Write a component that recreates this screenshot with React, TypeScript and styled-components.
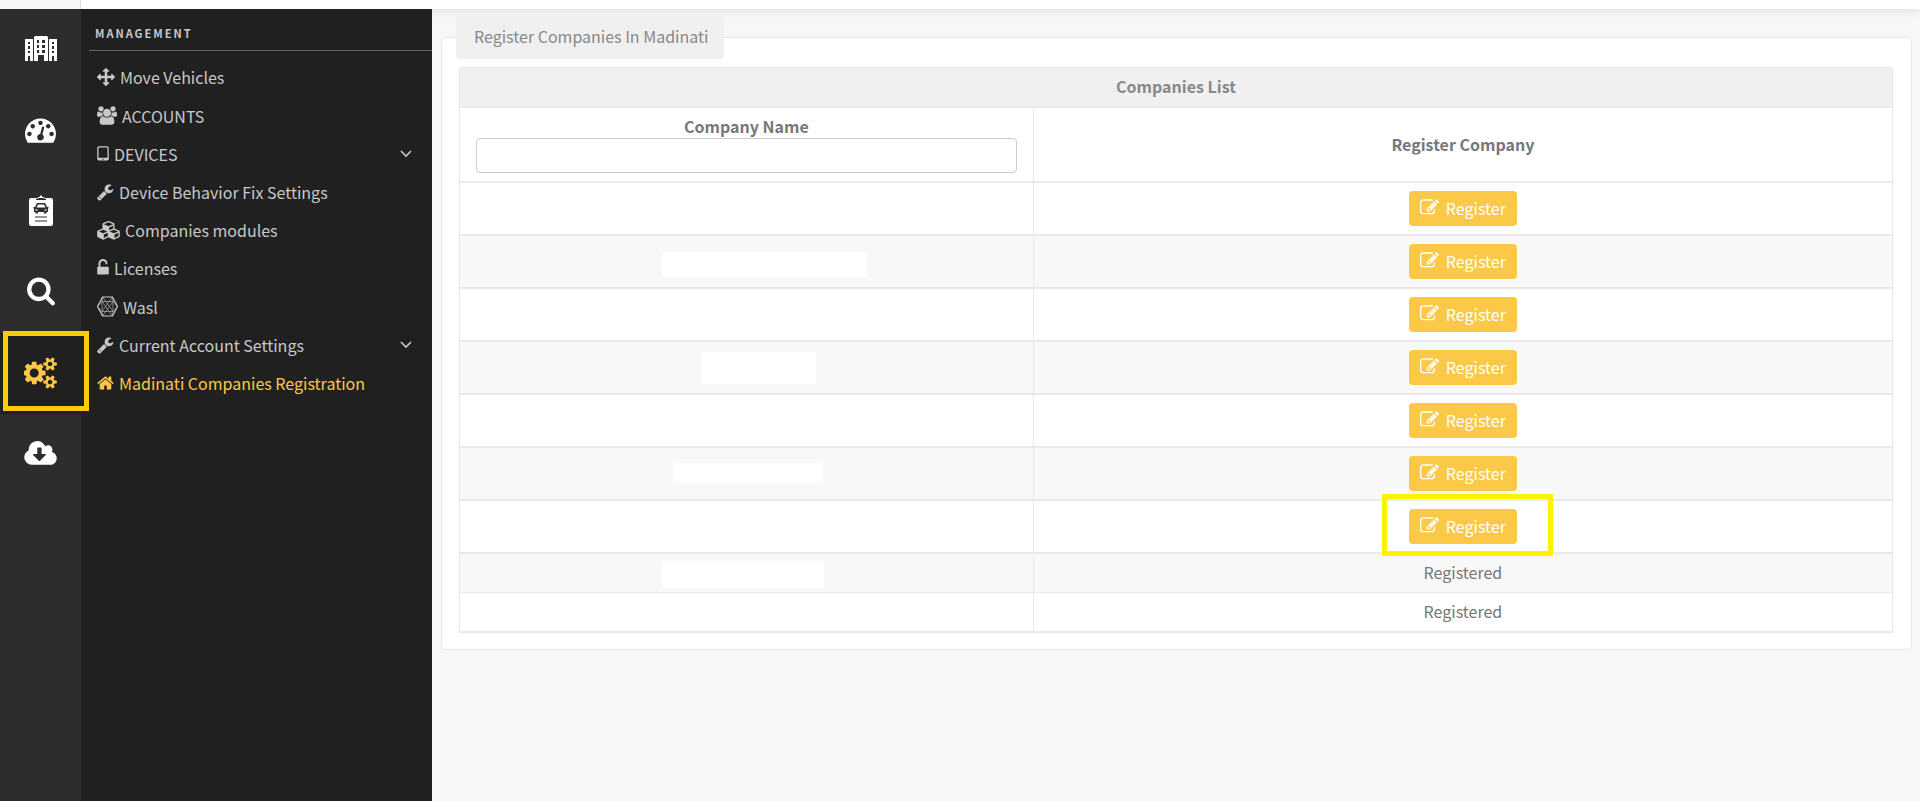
import React from "react";
import styled, { createGlobalStyle } from "styled-components";

const GlobalStyle = createGlobalStyle`
  *, *::before, *::after { box-sizing: border-box; }
  body {
    margin: 0;
    background: #f7f7f7;
    color: #777;
    font-family: "Noto Sans CJK SC", "Noto Sans", sans-serif;
    font-size: 16px;
    line-height: 22px;
  }
`;

const Page = styled.div`
  display: flex;
  flex-direction: column;
  min-height: 100vh;
`;

const TopBar = styled.header`
  display: flex;
  height: 9px;
  background: #fff;
  box-shadow: 0 2px 10px rgba(0, 0, 0, 0.1);
`;

const TopBarCorner = styled.div`
  width: 81px;
  background: #f5f5f5;
  border-right: 1px solid #ddd;
`;

const Body = styled.div`
  display: flex;
  flex: 1;
`;

const Rail = styled.nav`
  position: relative;
  z-index: 1;
  width: 81px;
  flex: none;
  background: #2d2d2d;
`;

const RailLink = styled.a<{ $active?: boolean }>`
  position: relative;
  display: flex;
  align-items: center;
  justify-content: center;
  height: 81px;
  padding-bottom: 2px;
  color: ${(p) => (p.$active ? "#fbc947" : "#fff")};
  background: ${(p) => (p.$active ? "#202020" : "transparent")};
`;

const RailMarker = styled.span`
  position: absolute;
  top: -2px;
  left: 3px;
  width: 86px;
  height: 80px;
  border: 5px solid #ffc90e;
`;

const Sidebar = styled.aside`
  position: relative;
  width: 351px;
  flex: none;
  padding-left: 8px;
  background: #202020;
`;

const SidebarTitle = styled.h2`
  margin: 0 0 8px;
  padding: 14px 6px 6px;
  border-bottom: 1px solid #666;
  color: #c8c8c8;
  font-size: 11px;
  line-height: 21px;
  font-weight: 700;
  letter-spacing: 2px;
`;

const MenuLink = styled.a<{ $active?: boolean }>`
  display: flex;
  align-items: center;
  gap: 5px;
  padding: 7px 20px 9px 8px;
  color: ${(p) => (p.$active ? "#fbc947" : "#c8c8c8")};
  text-decoration: none;
  svg { flex: none; }
`;

const MenuText = styled.span`
  flex: 1;
`;

const Main = styled.main`
  flex: 1;
  min-width: 0;
  padding: 7px 8px 24px 9px;
`;

const Panel = styled.fieldset`
  min-width: 0;
  margin: 0;
  padding: 8px 14px 16px;
  border: 1px solid #e9e9e9;
  border-radius: 4px;
  background: #fff;
`;

const PanelTitle = styled.legend`
  padding: 9px 16px 12px 18px;
  border-radius: 4px;
  background: #f0f0f0;
  color: #888;
`;

const TableFrame = styled.div`
  padding: 0 4px 0 3px;
`;

const Table = styled.table`
  width: 100%;
  table-layout: fixed;
  border-spacing: 0;
  border: 1px solid #e9e9e9;
  border-bottom: 0;
  border-radius: 4px 4px 0 0;
  text-align: center;
`;

const Column = styled.col<{ $width: string }>`
  width: ${(p) => p.$width};
`;

const TableTitle = styled.th`
  padding: 7px 16px 9px;
  border-bottom: 2px solid #e9e9e9;
  background: #f0f0f0;
  color: #888;
  font-weight: 700;
`;

const ColumnHead = styled.th`
  padding: 7px 16px 8px;
  border-bottom: 2px solid #e9e9e9;
  font-weight: 700;
  & + & { border-left: 1px solid #e9e9e9; }
`;

const FilterLabel = styled.label`
  display: block;
  padding-bottom: 1px;
`;

const FilterInput = styled.input`
  display: block;
  width: 100%;
  height: 35px;
  padding: 0 12px;
  border: 1px solid #ccc;
  border-radius: 4px;
  background: #fff;
  color: #777;
  font: inherit;
`;

const Row = styled.tr`
  &:nth-child(even) { background: #f8f8f8; }
`;

const Cell = styled.td<{ $line: number; $text?: boolean }>`
  position: relative;
  padding: ${(p) => (p.$text ? "7px 16px 9px" : "8px 16px")};
  border-bottom: ${(p) => p.$line}px solid #e9e9e9;
  & + & { border-left: 1px solid #e9e9e9; }
`;

const NameMask = styled.span<{ $left: number; $top: number; $w: number; $h: number }>`
  position: absolute;
  left: ${(p) => p.$left}px;
  top: ${(p) => p.$top}px;
  width: ${(p) => p.$w}px;
  height: ${(p) => p.$h}px;
  background: #fff;
`;

const RegisterWrap = styled.div`
  position: relative;
  display: inline-block;
  vertical-align: top;
`;

const RegisterButton = styled.button`
  display: flex;
  align-items: center;
  gap: 7px;
  height: 35px;
  padding: 0 11px 2px;
  border: 0;
  border-radius: 4px;
  background: #fbc947;
  color: #fff;
  font: inherit;
  cursor: pointer;
`;

const RegisterMarker = styled.span`
  position: absolute;
  inset: -15px -36px -12px -27px;
  z-index: 1;
  border: 5px solid #fff200;
  pointer-events: none;
`;

type GlyphProps = { box: string; w: number; h: number; d: string };
const Glyph = ({ box, w, h, d }: GlyphProps) => (
  <svg viewBox={box} width={w} height={h} fill="currentColor" aria-hidden="true">
    <path d={d} />
  </svg>
);

const PATHS = {
  arrows:
    "M1792 896q0 26-19 45l-256 256q-19 19-45 19t-45-19-19-45v-128h-384v384h128q26 0 45 19t19 45-19 45l-256 256q-19 19-45 19t-45-19l-256-256q-19-19-19-45t19-45 45-19h128v-384h-384v128q0 26-19 45t-45 19-45-19l-256-256q-19-19-19-45t19-45l256-256q19-19 45-19t45 19 19 45v128h384v-384h-128q-26 0-45-19t-19-45 19-45l256-256q19-19 45-19t45 19l256 256q19 19 19 45t-19 45-45 19h-128v384h384v-128q0-26 19-45t45-19 45 19l256 256q19 19 19 45z",
  users:
    "M529 896q-162 5-265 128h-134q-82 0-138-40.5t-56-118.5q0-353 124-353 6 0 43.5 21t97.5 42.5 119 21.5q67 0 133-23-5 37-5 66 0 139 81 256zm1071 637q0 120-73 189.5t-194 69.5h-874q-121 0-194-69.5t-73-189.5q0-53 3.5-103.5t14-109 26.5-108.5 43-97.5 62-81 85.5-53.5 111.5-20q10 0 43 21.5t73 48 107 48 135 21.5 135-21.5 107-48 73-48 43-21.5q61 0 111.5 20t85.5 53.5 62 81 43 97.5 26.5 108.5 14 109 3.5 103.5zm-1024-1277q0 106-75 181t-181 75-181-75-75-181 75-181 181-75 181 75 75 181zm704 384q0 159-112.5 271.5t-271.5 112.5-271.5-112.5-112.5-271.5 112.5-271.5 271.5-112.5 271.5 112.5 112.5 271.5zm576 225q0 78-56 118.5t-138 40.5h-134q-103-123-265-128 81-117 81-256 0-29-5-66 66 23 133 23 59 0 119-21.5t97.5-42.5 43.5-21q124 0 124 353zm-128-609q0 106-75 181t-181 75-181-75-75-181 75-181 181-75 181 75 75 181z",
  tablet:
    "M640 1408q0-26-19-45t-45-19-45 19-19 45 19 45 45 19 45-19 19-45zm384-160v-960q0-13-9.5-22.5t-22.5-9.5h-832q-13 0-22.5 9.5t-9.5 22.5v960q0 13 9.5 22.5t22.5 9.5h832q13 0 22.5-9.5t9.5-22.5zm128-960v1088q0 66-47 113t-113 47h-832q-66 0-113-47t-47-113v-1088q0-66 47-113t113-47h832q66 0 113 47t47 113z",
  wrench:
    "M448 1472q0-26-19-45t-45-19-45 19-19 45 19 45 45 19 45-19 19-45zm644-420l-682 682q-37 37-90 37-52 0-91-37l-106-108q-38-36-38-90 0-53 38-91l681-681q39 98 114.5 173.5t173.5 114.5zm634-435q0 39-23 106-47 134-164.5 217.5t-258.5 83.5q-185 0-316.5-131.5t-131.5-316.5 131.5-316.5 316.5-131.5q58 0 121.5 16.5t107.5 46.5q16 11 16 28t-16 28l-293 169v224l193 107q5-3 79-48.5t135.5-81 70.5-35.5q15 0 23.5 10t8.5 25z",
  cubes:
    "M576 1664l384-192v-314l-384 164v342zm-64-454l404-173-404-173-404 173zm1088 454l384-192v-314l-384 164v342zm-64-454l404-173-404-173-404 173zm-448-293l384-165v-266l-384 164v267zm-64-379l441-189-441-189-441 189zm1088 518v416q0 36-19 67t-52 47l-448 224q-25 14-57 14t-57-14l-448-224q-4-2-7-4-2 2-7 4l-448 224q-25 14-57 14t-57-14l-448-224q-33-16-52-47t-19-67v-416q0-38 21.5-70t56.5-48l434-186v-400q0-38 21.5-70t56.5-48l448-192q23-10 50-10t50 10l448 192q35 16 56.5 48t21.5 70v400l434 186q36 16 57 48t21 70z",
  unlock:
    "M1056 768q40 0 68 28t28 68v576q0 40-28 68t-68 28h-960q-40 0-68-28t-28-68v-576q0-40 28-68t68-28h32v-320q0-185 131.5-316.5t316.5-131.5 316.5 131.5 131.5 316.5q0 26-19 45t-45 19h-64q-26 0-45-19t-19-45q0-106-75-181t-181-75-181 75-75 181v320h736z",
  home:
    "M1472 992v480q0 26-19 45t-45 19h-384v-384h-256v384h-384q-26 0-45-19t-19-45v-480q0-1 .5-3t.5-3l575-474 575 474q1 2 1 6zm223-69l-62 74q-8 9-21 11h-3q-13 0-21-7l-692-577-692 577q-12 8-24 7-13-2-21-11l-62-74q-8-10-7-23.5t11-21.5l719-599q32-26 76-26t76 26l244 204v-195q0-14 9-23t23-9h192q14 0 23 9t9 23v408l219 182q10 8 11 21.5t-7 23.5z",
  gauge:
    "M384 1152q0-53-37.5-90.5t-90.5-37.5-90.5 37.5-37.5 90.5 37.5 90.5 90.5 37.5 90.5-37.5 37.5-90.5zm192-448q0-53-37.5-90.5t-90.5-37.5-90.5 37.5-37.5 90.5 37.5 90.5 90.5 37.5 90.5-37.5 37.5-90.5zm428 481l101-382q6-26-7.5-48.5t-38.5-29.5-48 6.5-30 39.5l-101 382q-60 5-107 43.5t-63 98.5q-20 77 20 146t117 89 146-20 89-117q16-60-6-117t-72-91zm660-33q0-53-37.5-90.5t-90.5-37.5-90.5 37.5-37.5 90.5 37.5 90.5 90.5 37.5 90.5-37.5 37.5-90.5zm-640-640q0-53-37.5-90.5t-90.5-37.5-90.5 37.5-37.5 90.5 37.5 90.5 90.5 37.5 90.5-37.5 37.5-90.5zm448 192q0-53-37.5-90.5t-90.5-37.5-90.5 37.5-37.5 90.5 37.5 90.5 90.5 37.5 90.5-37.5 37.5-90.5zm320 448q0 261-141 483-19 29-54 29h-1402q-35 0-54-29-141-221-141-483 0-182 71-348t191-286 286-191 348-71 348 71 286 191 191 286 71 348z",
  search:
    "M1216 832q0-185-131.5-316.5t-316.5-131.5-316.5 131.5-131.5 316.5 131.5 316.5 316.5 131.5 316.5-131.5 131.5-316.5zm512 832q0 52-38 90t-90 38q-54 0-90-38l-343-342q-179 124-399 124-143 0-273.5-55.5t-225-150-150-225-55.5-273.5 55.5-273.5 150-225 225-150 273.5-55.5 273.5 55.5 225 150 150 225 55.5 273.5q0 220-124 399l343 343q37 37 37 90z",
  cogs:
    "M832 896q0-106-75-181t-181-75-181 75-75 181 75 181 181 75 181-75 75-181zm768 512q0-52-38-90t-90-38-90 38-38 90q0 53 37.5 90.5t90.5 37.5 90.5-37.5 37.5-90.5zm0-1024q0-52-38-90t-90-38-90 38-38 90q0 53 37.5 90.5t90.5 37.5 90.5-37.5 37.5-90.5zm-384 421v185q0 10-7 19.5t-16 10.5l-155 24q-11 35-32 76 34 48 90 115 7 11 7 20 0 12-7 19-23 30-82.5 89.5t-78.5 59.5q-11 0-21-7l-115-90q-37 19-77 31-11 108-23 155-7 24-30 24h-186q-11 0-20-7.5t-10-17.5l-23-153q-34-10-75-31l-118 89q-7 7-20 7-11 0-21-8-144-133-144-160 0-9 7-19 10-14 41-53t47-61q-23-44-35-82l-152-24q-10-1-17-9.5t-7-19.5v-185q0-10 7-19.5t16-10.5l155-24q11-35 32-76-34-48-90-115-7-11-7-20 0-12 7-20 22-30 82-89t79-59q11 0 21 7l115 90q34-18 77-32 11-108 23-154 7-24 30-24h186q11 0 20 7.5t10 17.5l23 153q34 10 75 31l118-89q8-7 20-7 11 0 21 8 144 133 144 160 0 8-7 19-12 16-42 54t-45 60q23 48 34 82l152 23q10 2 17 10.5t7 19.5zm640 533v140q0 16-149 31-12 27-30 52 51 113 51 138 0 4-4 7-122 71-124 71-8 0-46-47t-52-68q-20 2-30 2t-30-2q-14 21-52 68t-46 47q-2 0-124-71-4-3-4-7 0-25 51-138-18-25-30-52-149-15-149-31v-140q0-16 149-31 13-29 30-52-51-113-51-138 0-4 4-7 4-2 35-20t59-34 30-16q8 0 46 46.5t52 67.5q20-2 30-2t30 2q51-71 92-112l6-2q4 0 124 70 4 3 4 7 0 25-51 138 17 23 30 52 149 15 149 31zm0-1024v140q0 16-149 31-12 27-30 52 51 113 51 138 0 4-4 7-122 71-124 71-8 0-46-47t-52-68q-20 2-30 2t-30-2q-14 21-52 68t-46 47q-2 0-124-71-4-3-4-7 0-25 51-138-18-25-30-52-149-15-149-31v-140q0-16 149-31 13-29 30-52-51-113-51-138 0-4 4-7 4-2 35-20t59-34 30-16q8 0 46 46.5t52 67.5q20-2 30-2t30 2q51-71 92-112l6-2q4 0 124 70 4 3 4 7 0 25-51 138 17 23 30 52 149 15 149 31z",
  cloud:
    "M1280 928q0-14-9-23t-23-9h-224v-352q0-13-9.5-22.5t-22.5-9.5h-192q-13 0-22.5 9.5t-9.5 22.5v352h-224q-13 0-22.5 9.5t-9.5 22.5q0 14 9 23l352 352q9 9 23 9t23-9l351-351q10-12 10-24zm640 224q0 159-112.5 271.5t-271.5 112.5h-1088q-185 0-316.5-131.5t-131.5-316.5q0-130 70-240t188-165q-2-30-2-43 0-212 150-362t362-150q156 0 285.5 87t188.5 231q71-62 166-62 106 0 181 75t75 181q0 76-41 138 130 31 213.5 135.5t83.5 238.5z",
  edit:
    "M888 1184l116-116-152-152-116 116v56h96v96h56zm440-720q-16-16-33 1l-350 350q-17 17-1 33t33-1l350-350q17-17 1-33zm80 594v190q0 119-84.5 203.5t-203.5 84.5h-832q-119 0-203.5-84.5t-84.5-203.5v-832q0-119 84.5-203.5t203.5-84.5h832q63 0 117 25 15 7 18 23 3 17-9 29l-49 49q-14 14-32 8-23-6-45-6h-832q-66 0-113 47t-47 113v832q0 66 47 113t113 47h832q66 0 113-47t47-113v-126q0-13 9-22l64-64q15-15 35-7t20 29zm-96-738l288 288-672 672h-288v-288zm444 132l-92 92-288-288 92-92q28-28 68-28t68 28l152 152q28 28 28 68t-28 68z",
};

const BuildingsIcon = () => (
  <svg viewBox="0 0 32 26" width="32" height="26" fill="currentColor" fillRule="evenodd" aria-hidden="true">
    <path d="M0 3h8v22H5v-5H3v5H0zM3 6v2h2V6zM3 10v3h2v-3zM3 15v2h2v-2zM9 1l1-1h12l1 1v24h-4v-6h-6v6H9zM12 4v3h2V4zM17 4v3h3V4zM12 9v3h2V9zM17 9v3h3V9zM12 14v3h2v-3zM17 14v3h3v-3zM24 3h8v22h-3v-5h-2v5h-3zM27 6v2h2V6zM27 10v3h2v-3zM27 15v2h2v-2z" />
  </svg>
);

const ClipboardCarIcon = () => (
  <svg viewBox="0 0 24 31" width="24" height="31" aria-hidden="true">
    <path fill="currentColor" d="M2 3h6q1-1 2.500-1L12 0l1.500 2Q15 2 16 3h6q2 0 2 2v24q0 2-2 2H2q-2 0-2-2V5q0-2 2-2z" />
    <g fill="#2d2d2d">
      <path d="M7 4l3-1h4l3 1v1H7z" />
      <path
        fillRule="evenodd"
        d="M8 8h8l2 4h1.500v1.500h-.5v3.500h-1.500v1.500H15V17H9v1.500H6.500V17H5v-3.500h-.5V12H6zM9 9.500L7.500 12.500h9L15 9.500zM6.500 14v1.500H9V15zM17.500 14L15 15v.5h2.500z"
      />
      <path d="M6 21.500h12v1H6zM6 25.500h12v1H6z" />
    </g>
  </svg>
);

const WaslIcon = () => (
  <svg viewBox="0 0 21 23" width="21" height="23" fill="none" stroke="currentColor" aria-hidden="true">
    <path strokeWidth="1.200" d="M5.500 2h10l5 9.500-5 9.500h-10l-5-9.500z" />
    <path
      strokeWidth=".6"
      d="M5.500 2L16 16.500M15.500 2L5 16.500M5.500 21L16 6.500M15.500 21L5 6.500M.5 11.500L5 6.500h11l4.500 5-4.500 5H5zM5.500 2L5 6.500v10l.5 4.500M15.500 2l.5 4.500v10l-.5 4.500"
    />
  </svg>
);

const Chevron = () => (
  <svg viewBox="0 0 12 8" width="12" height="8" fill="none" stroke="currentColor" strokeWidth="1.600" aria-hidden="true">
    <path d="M1 1l5 5 5-5" />
  </svg>
);

const wrench = <Glyph box="64 0 1728 1792" w={17} h={18} d={PATHS.wrench} />;

const railItems = [
  { label: "Companies", icon: <BuildingsIcon /> },
  { label: "Dashboard", icon: <Glyph box="0 128 1792 1536" w={31} h={27} d={PATHS.gauge} /> },
  { label: "Vehicle reports", icon: <ClipboardCarIcon /> },
  { label: "Search", icon: <Glyph box="0 128 1792 1664" w={30} h={29} d={PATHS.search} /> },
  { label: "Management", icon: <Glyph box="0 0 1920 1792" w={34} h={32} d={PATHS.cogs} />, active: true },
  { label: "Downloads", icon: <Glyph box="0 128 1920 1536" w={33} h={26} d={PATHS.cloud} /> },
];

const menuItems = [
  { label: "Move Vehicles", icon: <Glyph box="0 0 1792 1792" w={18} h={18} d={PATHS.arrows} /> },
  { label: "ACCOUNTS", icon: <Glyph box="-64 0 1920 1792" w={20} h={23} d={PATHS.users} /> },
  { label: "DEVICES", icon: <Glyph box="0 0 1152 1792" w={12} h={18} d={PATHS.tablet} />, expands: true },
  { label: "Device Behavior Fix Settings", icon: wrench },
  { label: "Companies modules", icon: <Glyph box="-64 -64 2176 1920" w={23} h={20} d={PATHS.cubes} /> },
  { label: "Licenses", icon: <Glyph box="0 0 1152 1792" w={12} h={18} d={PATHS.unlock} /> },
  { label: "Wasl", icon: <WaslIcon /> },
  { label: "Current Account Settings", icon: wrench, expands: true },
  { label: "Madinati Companies Registration", icon: <Glyph box="64 0 1664 1792" w={17} h={18} d={PATHS.home} />, active: true },
];

type Mask = { left: number; top: number; w: number; h: number };
type Company = { registered?: boolean; marked?: boolean; line: number; mask?: Mask };

const companies: Company[] = [
  { line: 2 },
  { line: 2, mask: { left: 202, top: 16, w: 205, h: 25 } },
  { line: 2 },
  { line: 2, mask: { left: 242, top: 10, w: 114, h: 32 } },
  { line: 2 },
  { line: 2, mask: { left: 213, top: 15, w: 150, h: 20 } },
  { line: 2, marked: true },
  { line: 1, registered: true, mask: { left: 202, top: 7, w: 162, h: 27 } },
  { line: 2, registered: true },
];

export default function App() {
  return (
    <Page>
      <GlobalStyle />
      <TopBar>
        <TopBarCorner />
      </TopBar>
      <Body>
        <Rail>
          {railItems.map((item) => (
            <RailLink key={item.label} href="#" aria-label={item.label} $active={item.active}>
              {item.icon}
              {item.active && <RailMarker />}
            </RailLink>
          ))}
        </Rail>
        <Sidebar>
          <SidebarTitle>MANAGEMENT</SidebarTitle>
          {menuItems.map((item) => (
            <MenuLink key={item.label} href="#" $active={item.active}>
              {item.icon}
              <MenuText>{item.label}</MenuText>
              {item.expands && <Chevron />}
            </MenuLink>
          ))}
        </Sidebar>
        <Main>
          <Panel>
            <PanelTitle>Register Companies In Madinati</PanelTitle>
            <TableFrame>
              <Table>
                <colgroup>
                  <Column $width="40%" />
                  <Column $width="60%" />
                </colgroup>
                <thead>
                  <tr>
                    <TableTitle colSpan={2}>Companies List</TableTitle>
                  </tr>
                  <tr>
                    <ColumnHead>
                      <FilterLabel htmlFor="company-name">Company Name</FilterLabel>
                      <FilterInput id="company-name" type="text" />
                    </ColumnHead>
                    <ColumnHead>Register Company</ColumnHead>
                  </tr>
                </thead>
                <tbody>
                  {companies.map((company, i) => (
                    <Row key={i}>
                      <Cell $line={company.line}>
                        {company.mask && (
                          <NameMask
                            $left={company.mask.left}
                            $top={company.mask.top}
                            $w={company.mask.w}
                            $h={company.mask.h}
                          />
                        )}
                      </Cell>
                      <Cell $line={company.line} $text={company.registered}>
                        {company.registered ? (
                          "Registered"
                        ) : (
                          <RegisterWrap>
                            <RegisterButton type="button">
                              <Glyph box="0 0 1792 1792" w={19} h={19} d={PATHS.edit} />
                              Register
                            </RegisterButton>
                            {company.marked && <RegisterMarker />}
                          </RegisterWrap>
                        )}
                      </Cell>
                    </Row>
                  ))}
                </tbody>
              </Table>
            </TableFrame>
          </Panel>
        </Main>
      </Body>
    </Page>
  );
}
